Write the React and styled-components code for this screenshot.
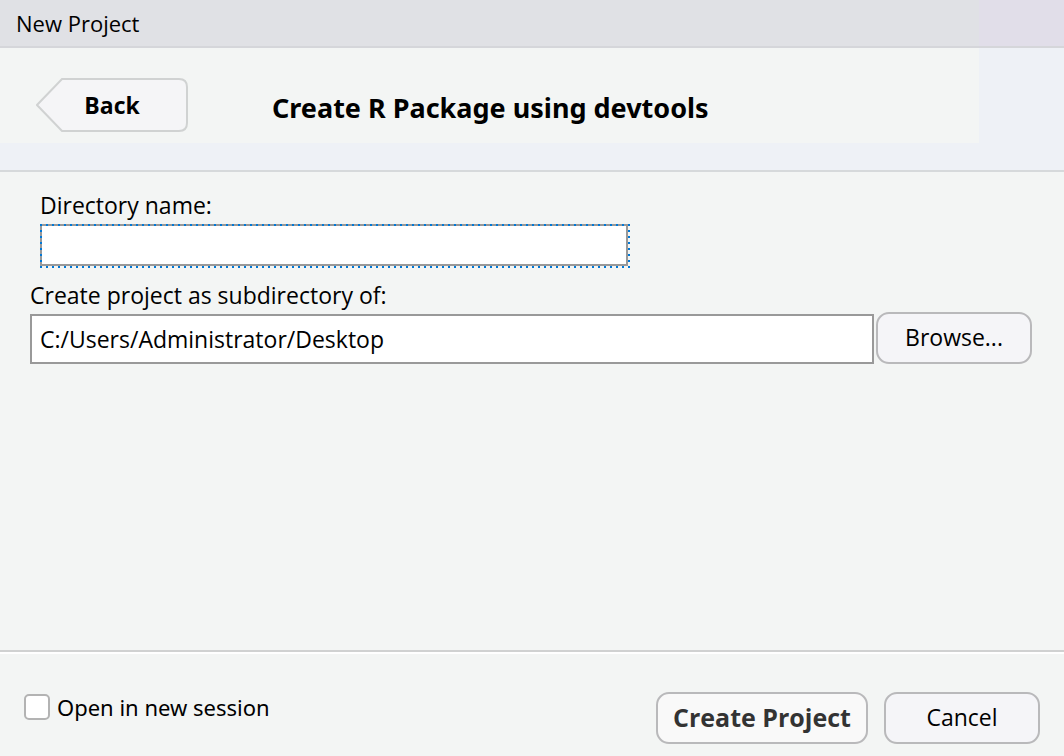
import React from "react";
import styled, { createGlobalStyle } from "styled-components";

const GlobalStyle = createGlobalStyle`
  *, *::before, *::after { box-sizing: border-box; }
  body {
    margin: 0;
    background: #f3f5f4;
    color: #000;
    font-family: "Open Sans", "Noto Sans", sans-serif;
    font-size: 23px;
    line-height: 30px;
  }
  button, input { font: inherit; color: inherit; }
`;

const Dialog = styled.div`
  display: flex;
  flex-direction: column;
  min-height: 100vh;
`;

const TitleBar = styled.div`
  height: 48px;
  padding: 8px 16px;
  border-bottom: 2px solid #d5d6da;
  background: linear-gradient(90deg, #e0e1e5 92%, #e1dee9 92%);
  font-size: 22px;
`;

const Header = styled.header`
  display: flex;
  align-items: flex-start;
  gap: 84px;
  height: 124px;
  padding: 30px 36px;
  border-bottom: 2px solid #d6d9db;
  background:
    linear-gradient(#eef1f6, #eef1f6) right / 8% 100% no-repeat,
    linear-gradient(#f3f5f4 78%, #eef1f6 78%);
`;

const BackButton = styled.button`
  position: relative;
  width: 152px;
  height: 54px;
  padding: 0;
  border: 0;
  background: none;
  font-weight: 700;
`;

const BackShape = styled.svg`
  position: absolute;
  inset: 0;
`;

const BackLabel = styled.span`
  position: relative;
`;

const Heading = styled.h1`
  margin: 0;
  padding-top: 14px;
  font-family: "Noto Sans", "Open Sans", sans-serif;
  font-size: 27px;
  line-height: 32px;
`;

const Content = styled.main`
  flex: 1;
  display: flex;
  flex-direction: column;
  gap: 12px;
  padding: 18px 32px 18px 30px;
`;

const Field = styled.div`
  display: flex;
  flex-direction: column;
  gap: 2px;
  padding-left: ${(p) => (p.$inset ? "10px" : "0")};
`;

const FieldLabel = styled.label`
  line-height: 30px;
`;

const TextInput = styled.input`
  display: block;
  flex: 1;
  width: 100%;
  min-width: 0;
  height: ${(p) => p.$height}px;
  padding: 0 8px;
  border: 2px solid #999;
  border-radius: 0;
  background: #fff;
  outline: none;
`;

const dots = (angle) =>
  `repeating-linear-gradient(${angle}, #0078d7 0 2px, transparent 2px 6px)`;

const FocusFrame = styled.div`
  position: relative;
  width: 100%;
  max-width: 590px;
  margin-top: 2px;
  padding: 0 2px 2px 0;

  &::after {
    content: "";
    position: absolute;
    inset: 0;
    pointer-events: none;
    background:
      ${dots("90deg")} top / 100% 2px no-repeat,
      ${dots("90deg")} bottom / 100% 2px no-repeat,
      ${dots("180deg")} left / 2px 100% no-repeat,
      ${dots("180deg")} right / 2px 100% no-repeat;
  }
`;

const PathRow = styled.div`
  display: flex;
  align-items: flex-end;
  gap: 2px;
`;

const Button = styled.button`
  flex: none;
  width: ${(p) => (p.$primary ? "212px" : "156px")};
  height: 52px;
  padding: 0 0 2px;
  border: 2px solid #b9b9bb;
  border-radius: 13px;
  background: ${(p) => (p.$primary ? "#f9f9f9" : "#f5f5f8")};
  color: ${(p) => (p.$primary ? "#333" : "#000")};
  font-size: ${(p) => (p.$primary ? "25px" : "23px")};
  font-weight: ${(p) => (p.$primary ? 700 : 400)};
`;

const Footer = styled.footer`
  display: flex;
  justify-content: space-between;
  height: 106px;
  padding: 40px 24px 0;
  border-top: 2px solid #d0d1d1;
  box-shadow: inset 0 2px #fff;
`;

const SessionOption = styled.label`
  display: flex;
  align-items: center;
  gap: 7px;
  height: 30px;
  font-family: "Noto Sans", "Open Sans", sans-serif;
  font-size: 22px;
`;

const Checkbox = styled.input`
  appearance: none;
  width: 26px;
  height: 26px;
  margin: 0;
  border: 2px solid #b3b3b3;
  border-radius: 5px;
  background: #fff;
`;

const Actions = styled.div`
  display: flex;
  gap: 16px;
`;

export default function App() {
  return (
    <>
      <GlobalStyle />
      <Dialog role="dialog" aria-label="New Project">
        <TitleBar>New Project</TitleBar>
        <Header>
          <BackButton type="button">
            <BackShape width="152" height="54" viewBox="0 0 152 54" aria-hidden="true">
              <path
                d="M26 1H143Q151 1 151 9V45Q151 53 143 53H26L1 27Z"
                fill="#f5f5f7"
                stroke="#d0d2d2"
                strokeWidth="2"
              />
            </BackShape>
            <BackLabel>Back</BackLabel>
          </BackButton>
          <Heading>Create R Package using devtools</Heading>
        </Header>
        <Content>
          <Field $inset>
            <FieldLabel htmlFor="directory">Directory name:</FieldLabel>
            <FocusFrame>
              <TextInput id="directory" type="text" $height={42} />
            </FocusFrame>
          </Field>
          <Field>
            <FieldLabel htmlFor="parent">Create project as subdirectory of:</FieldLabel>
            <PathRow>
              <TextInput
                id="parent"
                type="text"
                $height={50}
                defaultValue="C:/Users/Administrator/Desktop"
              />
              <Button type="button">Browse...</Button>
            </PathRow>
          </Field>
        </Content>
        <Footer>
          <SessionOption>
            <Checkbox type="checkbox" />
            Open in new session
          </SessionOption>
          <Actions>
            <Button type="button" $primary>Create Project</Button>
            <Button type="button">Cancel</Button>
          </Actions>
        </Footer>
      </Dialog>
    </>
  );
}
